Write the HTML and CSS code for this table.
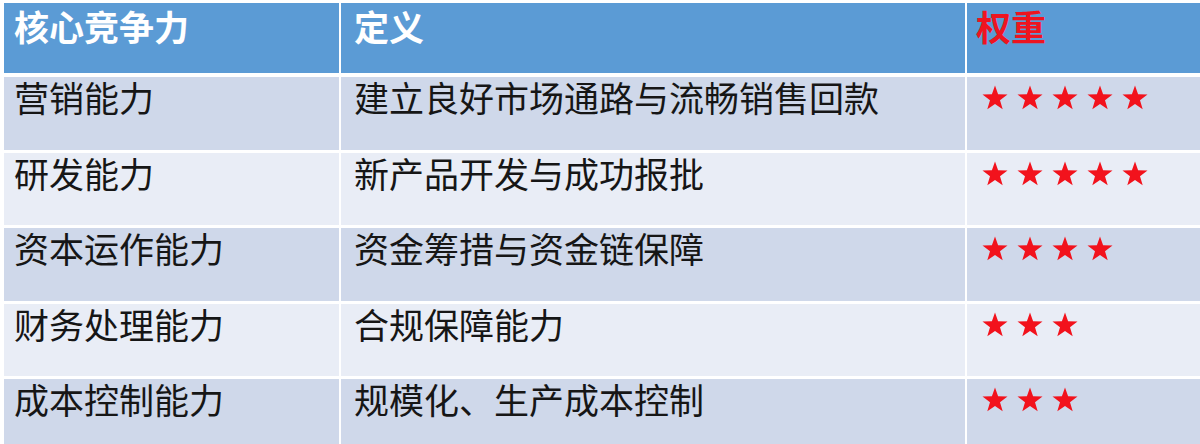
FILE: index.html
```html
<!DOCTYPE html>
<html lang="zh-CN">
<head>
<meta charset="utf-8">
<link rel="stylesheet" href="styles.css">
</head>
<body>
<div class="table">
  <div class="row head">
    <div class="cell c1">核心竞争力</div>
    <div class="cell c2">定义</div>
    <div class="cell c3 red">权重</div>
  </div>
  <div class="row odd">
    <div class="cell c1">营销能力</div>
    <div class="cell c2">建立良好市场通路与流畅销售回款</div>
    <div class="cell c3 stars" data-n="5"></div>
  </div>
  <div class="row even">
    <div class="cell c1">研发能力</div>
    <div class="cell c2">新产品开发与成功报批</div>
    <div class="cell c3 stars" data-n="5"></div>
  </div>
  <div class="row odd">
    <div class="cell c1">资本运作能力</div>
    <div class="cell c2">资金筹措与资金链保障</div>
    <div class="cell c3 stars" data-n="4"></div>
  </div>
  <div class="row even">
    <div class="cell c1">财务处理能力</div>
    <div class="cell c2">合规保障能力</div>
    <div class="cell c3 stars" data-n="3"></div>
  </div>
  <div class="row odd">
    <div class="cell c1">成本控制能力</div>
    <div class="cell c2">规模化、生产成本控制</div>
    <div class="cell c3 stars" data-n="3"></div>
  </div>
</div>
<script src="script.js"></script>
</body>
</html>
```

FILE: styles.css
```css
html, body {
  margin: 0;
  padding: 0;
  background: #ffffff;
  overflow: hidden;
}
body {
  padding: 3px 0 0 4px;
  font-family: "Noto Sans CJK SC", "Noto Sans", sans-serif;
}
.table {
  display: flex;
  flex-direction: column;
  gap: 3px;
}
.row {
  display: grid;
  grid-template-columns: 335px 624px 1fr;
  column-gap: 2px;
  height: 72.5px;
}
.row.head {
  height: 70px;
  margin-bottom: 1px;
}
.cell {
  font-size: 35px;
  line-height: 40px;
  color: #161616;
  padding-top: 0;
  white-space: nowrap;
}
.head .cell {
  background: #5b9bd5;
  color: #ffffff;
  font-weight: 700;
  line-height: 45px;
}
.head .cell.red {
  color: #ee1420;
}
.odd .cell { background: #cfd8ea; }
.even .cell { background: #e9edf6; }
.c1 { padding-left: 10px; }
.c2 { padding-left: 13px; }
.c3 { padding-left: 10px; }
.head .c3 { padding-left: 9px; }
.stars {
  display: flex;
  gap: 9px;
  padding-left: 15px;
  padding-top: 8px;
  align-items: flex-start;
}
.star {
  width: 26px;
  height: 25px;
  display: block;
}
```

FILE: script.js
```js
document.querySelectorAll('.stars').forEach(function (el) {
  var n = parseInt(el.getAttribute('data-n'), 10);
  var html = '';
  for (var i = 0; i < n; i++) {
    html += '<svg class="star" viewBox="0 0 26 25"><path d="M13 0.5 L16.1 9.3 L25.5 9.5 L18 15.2 L20.7 24.3 L13 18.9 L5.3 24.3 L8 15.2 L0.5 9.5 L9.9 9.3 Z" fill="#f2121c"/></svg>';
  }
  el.innerHTML = html;
});
```
